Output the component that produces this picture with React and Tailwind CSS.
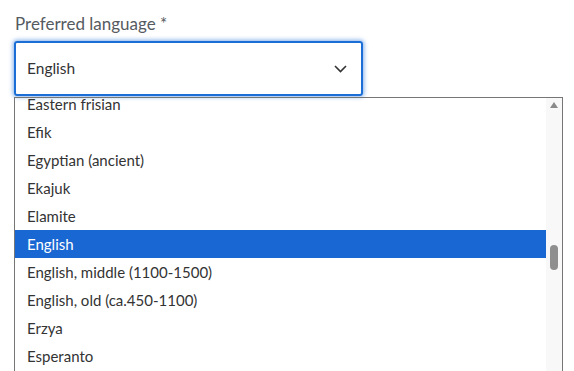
import React from 'react';

const languages = [
  'Eastern frisian',
  'Efik',
  'Egyptian (ancient)',
  'Ekajuk',
  'Elamite',
  'English',
  'English, middle (1100-1500)',
  'English, old (ca.450-1100)',
  'Erzya',
  'Esperanto',
];

export default function App() {
  const selected = 'English';

  return (
    <div className="w-[574px] h-[371px] overflow-hidden bg-white pl-[14px] pt-[12px] font-['Lato','Open_Sans',sans-serif]">
      {/* Label */}
      <div className="pl-[1px] text-[17px] leading-[24px] text-[#555b61]">Preferred language *</div>

      {/* Select box */}
      <div className="mt-[5px] w-[349px] h-[55px] border-2 border-[#1a6ed6] rounded-[3px] shadow-[0_0_4px_1px_rgba(26,110,214,0.55)] flex items-center justify-between pl-[11px] pr-[14px]">
        <span className="text-[15.5px] text-[#333]">{selected}</span>
        <svg className="w-[13px] h-[8px] text-[#333]" viewBox="0 0 13 8" fill="none" stroke="currentColor" strokeWidth="1.6">
          <path d="M1 1l5.5 5.5L12 1" />
        </svg>
      </div>

      {/* Dropdown list */}
      <div className="mt-[1px] w-[549px] h-[280px] border border-b-0 border-[#767676] flex overflow-hidden">
        <div className="flex-1 overflow-hidden">
          <div className="-mt-[8px]">
            {languages.map((lang) => (
              <div
                key={lang}
                className={`h-[28px] flex items-center pl-[12px] text-[15px] ${
                  lang === selected ? 'bg-[#1967d2] text-white' : 'text-[#333]'
                }`}
              >
                {lang}
              </div>
            ))}
          </div>
        </div>

        {/* Scrollbar */}
        <div className="w-[16px] bg-[#f8f8f8] flex flex-col items-center">
          <div className="mt-[4px] w-0 h-0 border-l-[4px] border-r-[4px] border-b-[6px] border-l-transparent border-r-transparent border-b-[#8a8a8a]" />
          <div className="mt-[137px] w-[8px] h-[25px] rounded-full bg-[#8f8f8f]" />
        </div>
      </div>
    </div>
  );
}
